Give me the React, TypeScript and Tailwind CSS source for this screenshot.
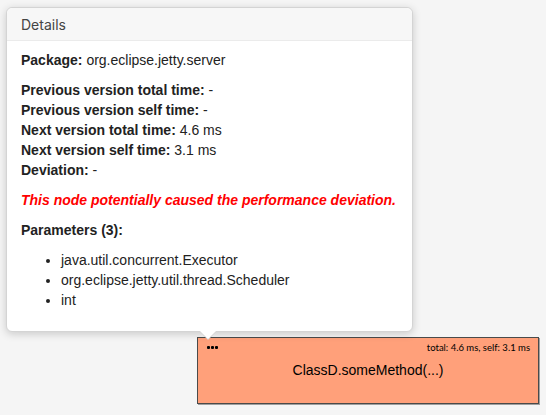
import React from 'react';

const params = [
  'java.util.concurrent.Executor',
  'org.eclipse.jetty.util.thread.Scheduler',
  'int',
];

const Row = ({ label, value }: { label: string; value: string }) => (
  <div className="leading-5">
    <span className="font-bold">{label}</span> {value}
  </div>
);

export default function App() {
  return (
    <div className="relative w-[546px] h-[415px] bg-[#f5f5f5] overflow-hidden font-['Liberation_Sans',Arial,sans-serif] text-[14px] text-[#222]">
      {/* Node on canvas */}
      <div className="absolute left-[197px] top-[337px] w-[342px] h-[67px] bg-[#ffa07a] border border-[#4a4a4a] shadow-[1px_1px_0_rgba(0,0,0,0.35)] flex flex-col">
        <div className="flex items-center justify-between pl-[9px] pr-[8px] pt-[3px] h-[16px]">
          <div className="flex gap-[1px]">
            <span className="w-[3px] h-[3px] rounded-[1px] bg-black" />
            <span className="w-[3px] h-[3px] rounded-[1px] bg-black" />
            <span className="w-[3px] h-[3px] rounded-[1px] bg-black" />
          </div>
          <span className="font-['Lato',sans-serif] text-[9.5px] leading-none text-black">total: 4.6 ms, self: 3.1 ms</span>
        </div>
        <div className="text-center text-black text-[14px] leading-5 mt-[6px]">ClassD.someMethod(...)</div>
      </div>

      {/* Popover */}
      <div className="absolute left-[6px] top-[7px] w-[407px] bg-white rounded-[6px] border border-[#d4d4d4] shadow-[0_2px_8px_rgba(0,0,0,0.18)]">
        <div className="h-[33px] flex items-center px-[14px] bg-[#f7f7f7] border-b border-[#ebebeb] rounded-t-[6px] font-['Inter',sans-serif] text-[14px] text-[#444]">
          Details
        </div>
        <div className="px-[14px] pt-[9px] pb-[21px] flex flex-col gap-[10px]">
          <Row label="Package:" value="org.eclipse.jetty.server" />
          <div>
            <Row label="Previous version total time:" value="-" />
            <Row label="Previous version self time:" value="-" />
            <Row label="Next version total time:" value="4.6 ms" />
            <Row label="Next version self time:" value="3.1 ms" />
            <Row label="Deviation:" value="-" />
          </div>
          <div className="leading-5 font-bold italic text-[#f00]">
            This node potentially caused the performance deviation.
          </div>
          <div className="leading-5 font-bold">Parameters (3):</div>
          <ul className="list-disc pl-[40px]">
            {params.map((p) => (
              <li key={p} className="leading-5">{p}</li>
            ))}
          </ul>
        </div>
        {/* Arrow */}
        <div className="absolute left-[192px] -bottom-[9px] w-0 h-0 border-l-[9px] border-r-[9px] border-t-[9px] border-l-transparent border-r-transparent border-t-[#d4d4d4]" />
        <div className="absolute left-[193px] -bottom-[8px] w-0 h-0 border-l-[8px] border-r-[8px] border-t-[8px] border-l-transparent border-r-transparent border-t-white" />
      </div>
    </div>
  );
}
